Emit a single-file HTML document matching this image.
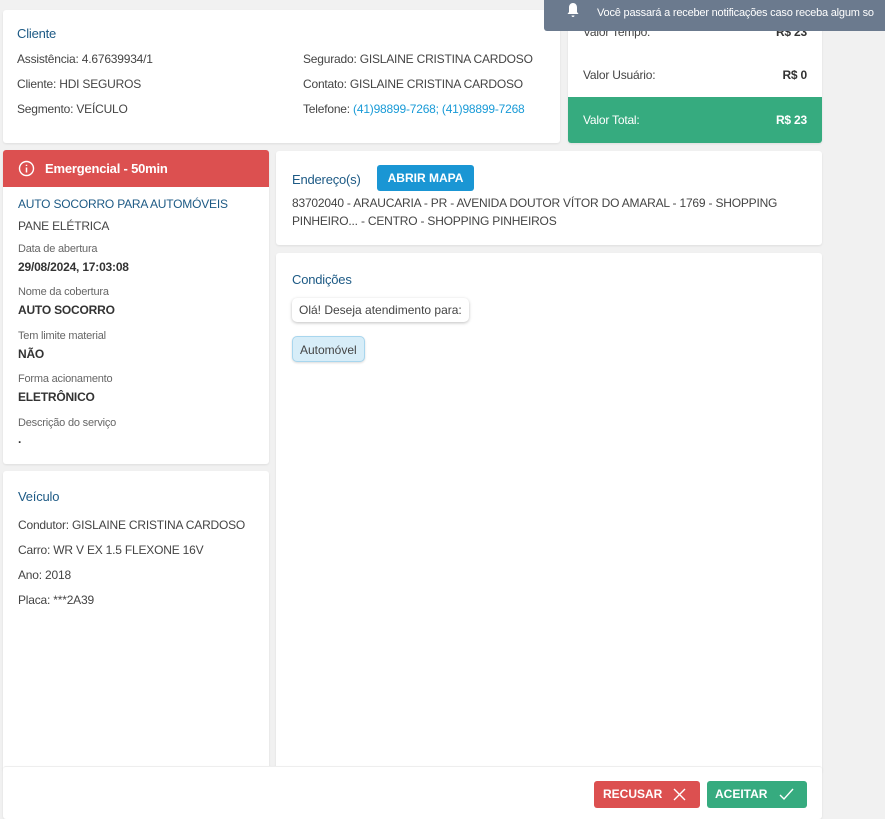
<!DOCTYPE html>
<html><head><meta charset="utf-8"><style>
*{box-sizing:border-box;margin:0;padding:0}
body{width:885px;height:819px;background:#f1f1f1;font-family:"Liberation Sans",sans-serif;font-size:12px;color:#444;position:relative;overflow:hidden}
.card{position:absolute;background:#fff;border-radius:3px;box-shadow:0 1px 2px rgba(0,0,0,.08)}
.t{position:absolute;white-space:nowrap;letter-spacing:-0.2px}
.h{color:#1d5a85;font-size:13px}
.lbl{font-size:11px;color:#666}
.v{font-weight:bold;color:#333;font-size:12px}
a{color:#1a9bd7;text-decoration:none}
</style></head><body>
<div class="card" style="left:3px;top:10px;width:557px;height:133px">
 <div class="t h" style="left:14px;top:16px">Cliente</div>
 <div class="t" style="left:14px;top:42px">Assistência: 4.67639934/1</div>
 <div class="t" style="left:14px;top:67px">Cliente: HDI SEGUROS</div>
 <div class="t" style="left:14px;top:92px">Segmento: VEÍCULO</div>
 <div class="t" style="left:300px;top:42px">Segurado: GISLAINE CRISTINA CARDOSO</div>
 <div class="t" style="left:300px;top:67px">Contato: GISLAINE CRISTINA CARDOSO</div>
 <div class="t" style="left:300px;top:92px">Telefone: <a>(41)98899-7268; (41)98899-7268</a></div>
</div>
<div class="card" style="left:568px;top:0;width:254px;height:143px;overflow:hidden">
 <div class="t" style="left:15px;top:25px">Valor Tempo:</div>
 <div class="t v" style="right:15px;top:25px">R$ 23</div>
 <div class="t" style="left:15px;top:68px">Valor Usuário:</div>
 <div class="t v" style="right:15px;top:68px">R$ 0</div>
 <div style="position:absolute;left:0;top:97px;width:254px;height:46px;background:#36ab7f">
  <div class="t" style="left:15px;top:16px;color:#fff">Valor Total:</div>
  <div class="t" style="right:15px;top:16px;color:#fff;font-weight:bold">R$ 23</div>
 </div>
</div>
<div style="position:absolute;left:544px;top:0;width:345px;height:31px;background:#6b7a8e;border-radius:0 0 0 3px;color:#fff;font-size:11px">
 <svg style="position:absolute;left:22px;top:2px" width="14" height="16" viewBox="0 0 14 16"><path d="M7 1C4.5 1 3 3 3 5.5V10L1.5 12H12.5L11 10V5.5C11 3 9.5 1 7 1Z M5.5 13.5H8.5C8.5 14.5 7.8 15 7 15S5.5 14.5 5.5 13.5Z" fill="#fff"/></svg>
 <div class="t" style="left:53px;top:7px">Você passará a receber notificações caso receba algum so</div>
</div>
<div class="card" style="left:3px;top:150px;width:266px;height:314px;overflow:hidden">
 <div style="position:absolute;left:0;top:0;width:266px;height:37px;background:#dc5050;color:#fff">
  <svg style="position:absolute;left:15px;top:10px" width="17" height="17" viewBox="0 0 17 17"><circle cx="8.5" cy="8.5" r="7" fill="none" stroke="#fff" stroke-width="1.4"/><path d="M8.5 7.5V12.5M8.5 4.8V6" stroke="#fff" stroke-width="1.5"/></svg>
  <div class="t" style="left:42px;top:11px;font-weight:bold;font-size:13px">Emergencial - 50min</div>
 </div>
 <div class="t h" style="left:15px;top:47px;font-size:12px">AUTO SOCORRO PARA AUTOMÓVEIS</div>
 <div class="t" style="left:15px;top:69px">PANE ELÉTRICA</div>
 <div class="t lbl" style="left:15px;top:93px">Data de abertura</div>
 <div class="t v" style="left:15px;top:110px">29/08/2024, 17:03:08</div>
 <div class="t lbl" style="left:15px;top:136px">Nome da cobertura</div>
 <div class="t v" style="left:15px;top:153px">AUTO SOCORRO</div>
 <div class="t lbl" style="left:15px;top:180px">Tem limite material</div>
 <div class="t v" style="left:15px;top:197px">NÃO</div>
 <div class="t lbl" style="left:15px;top:223px">Forma acionamento</div>
 <div class="t v" style="left:15px;top:240px">ELETRÔNICO</div>
 <div class="t lbl" style="left:15px;top:267px">Descrição do serviço</div>
 <div class="t v" style="left:15px;top:282px">.</div>
</div>
<div class="card" style="left:3px;top:471px;width:266px;height:300px">
 <div class="t h" style="left:15px;top:18px">Veículo</div>
 <div class="t" style="left:15px;top:47px">Condutor: GISLAINE CRISTINA CARDOSO</div>
 <div class="t" style="left:15px;top:72px">Carro: WR V EX 1.5 FLEXONE 16V</div>
 <div class="t" style="left:15px;top:97px">Ano: 2018</div>
 <div class="t" style="left:15px;top:122px">Placa: ***2A39</div>
</div>
<div class="card" style="left:276px;top:151px;width:546px;height:94px">
 <div class="t h" style="left:16px;top:21px">Endereço(s)</div>
 <div style="position:absolute;left:101px;top:14px;width:97px;height:26px;background:#1a96d4;border-radius:3px;color:#fff;font-weight:bold;font-size:12px;text-align:center;line-height:26px">ABRIR MAPA</div>
 <div class="t" style="left:16px;top:45px">83702040 - ARAUCARIA - PR - AVENIDA DOUTOR VÍTOR DO AMARAL - 1769 - SHOPPING</div>
 <div class="t" style="left:16px;top:63px">PINHEIRO... - CENTRO - SHOPPING PINHEIROS</div>
</div>
<div class="card" style="left:276px;top:253px;width:546px;height:520px">
 <div class="t h" style="left:16px;top:19px">Condições</div>
 <div style="position:absolute;left:16px;top:45px;height:24px;padding:0 7px;line-height:24px;border-radius:5px;box-shadow:0 1px 3px rgba(0,0,0,.25);white-space:nowrap">Olá! Deseja atendimento para:</div>
 <div style="position:absolute;left:16px;top:83px;height:26px;padding:0 7px;line-height:26px;border-radius:5px;background:#d7edf8;border:1px solid #a8d6ee;box-shadow:0 1px 2px rgba(0,0,0,.15)">Automóvel</div>
</div>
<div class="card" style="left:3px;top:766px;width:819px;height:53px;border-top:1px solid #eee">
 <div style="position:absolute;left:591px;top:14px;width:106px;height:27px;background:#dc5050;border-radius:3px;color:#fff;font-weight:bold;line-height:27px;padding-left:9px">RECUSAR
  <svg style="position:absolute;left:79px;top:7px" width="13" height="13" viewBox="0 0 13 13"><path d="M1 1L12 12M12 1L1 12" stroke="#fff" stroke-width="1.4"/></svg></div>
 <div style="position:absolute;left:704px;top:14px;width:100px;height:27px;background:#36ab7f;border-radius:3px;color:#fff;font-weight:bold;line-height:27px;padding-left:8px">ACEITAR
  <svg style="position:absolute;left:72px;top:7px" width="15" height="13" viewBox="0 0 15 13"><path d="M1 7L5 11L14 1" fill="none" stroke="#fff" stroke-width="1.4"/></svg></div>
</div>
</body></html>
